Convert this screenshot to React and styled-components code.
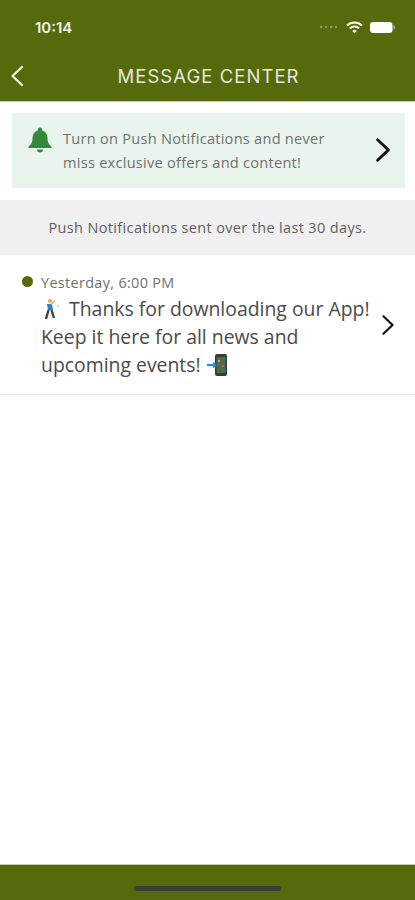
import styled, { createGlobalStyle } from "styled-components";

const GlobalStyle = createGlobalStyle`
    html, body {
        margin: 0;
        padding: 0;
        background: #fff;
    }
`

const Page = styled.div`
    width: 415px;
    height: 900px;
    display: flex;
    flex-direction: column;
    overflow: hidden;
    background: #fff;
    font-family: "Open Sans", "Liberation Sans", sans-serif;
`

const Header = styled.header`
    height: 101px;
    flex-shrink: 0;
    background: #556b0b;
    border-bottom: 1px solid #c4cdb0;
    color: #fff;
`

const StatusBar = styled.div`
    height: 54px;
    display: flex;
    align-items: center;
    justify-content: space-between;
    padding: 0 20px 0 35px;
`

const Time = styled.span`
    font-family: Inter, "Liberation Sans", sans-serif;
    font-size: 15px;
    font-weight: 600;
    color: #f1f3e6;
`

const StatusIcons = styled.div`
    display: flex;
    align-items: center;
    gap: 7px;
`

const NavBar = styled.div`
    height: 44px;
    display: flex;
    align-items: center;
    justify-content: center;
    position: relative;
`

const BackButton = styled.span`
    position: absolute;
    left: 9px;
    top: 10px;
    display: flex;
`

const Title = styled.h1`
    margin: 0 0 0 2px;
    font-family: Inter, "Open Sans", sans-serif;
    font-size: 18.5px;
    font-weight: 400;
    letter-spacing: 1.05px;
    color: #e6e9dc;
`

const Banner = styled.div`
    margin: 11px 10px 0 12px;
    height: 75px;
    display: flex;
    align-items: center;
    background: #e9f5ec;
    padding: 0 9px 0 16px;
`

const BellIcon = styled.svg`
    align-self: flex-start;
    margin-top: 14px;
`

const BannerText = styled.p`
    flex: 1;
    margin: 0 0 0 11px;
    font-size: 14.6px;
    letter-spacing: 0.25px;
    line-height: 23.5px;
    color: #707070;
`

const BannerArrow = styled.span`
    display: flex;
    margin-top: -2px;
`

const Notice = styled.div`
    margin-top: 12px;
    height: 55px;
    display: flex;
    align-items: center;
    justify-content: center;
    background: #f0f0f0;
    font-size: 14.5px;
    letter-spacing: 0.35px;
    color: #606060;
`

const MessageRow = styled.div`
    height: 139px;
    display: flex;
    align-items: center;
    padding: 0 16px 0 22px;
    border-bottom: 1px solid #ececec;
`

const MessageBody = styled.div`
    flex: 1;
    padding-top: 3px;
`

const DateLine = styled.div`
    display: flex;
    align-items: center;
    gap: 8px;
    font-size: 14.4px;
    letter-spacing: 0.35px;
    line-height: 20px;
    color: #707070;
`

const Dot = styled.span`
    width: 11px;
    height: 11px;
    border-radius: 50%;
    background: #556b0b;
    margin-top: -3px;
`

const MessageText = styled.p`
    margin: 2px 0 0 19px;
    font-size: 19.4px;
    line-height: 28px;
    color: #4a4a4a;
    white-space: nowrap;
`

const Emoji = styled.svg`
    vertical-align: ${(props) => props.$align};
    margin-right: ${(props) => props.$gap || 0}px;
`

const Spacer = styled.div`
    flex: 1;
`

const BottomBar = styled.footer`
    height: 35px;
    flex-shrink: 0;
    display: flex;
    justify-content: center;
    background: #556b0b;
    border-top: 1px solid #c4cdb0;
`

const HomeIndicator = styled.span`
    width: 147px;
    height: 5px;
    margin-top: 21px;
    border-radius: 3px;
    background: #3a4038;
`

const Chevron = ({ size = 24, color = "#111", width = 2.4 }) => (
    <svg width={size} height={size} viewBox="0 0 24 24" fill="none" stroke={color} strokeWidth={width} strokeLinecap="round" strokeLinejoin="round">
        <path d="M7 2.5 17 12 7 21.5" />
    </svg>
)

const App = () => {
    return (
        <Page>
            <GlobalStyle />
            <Header>
                <StatusBar>
                    <Time>10:14</Time>
                    <StatusIcons>
                        <svg width="20" height="4" viewBox="0 0 20 4" fill="#8f9e62">
                            <circle cx="2" cy="2" r="1.2" />
                            <circle cx="7" cy="2" r="1.2" />
                            <circle cx="12" cy="2" r="1.2" />
                            <circle cx="17" cy="2" r="1.2" />
                        </svg>
                        <svg width="17" height="13" viewBox="0 0 17 13" fill="none" stroke="#fff" strokeWidth="2">
                            <path d="M1 4.6a10.6 10.6 0 0 1 15 0" />
                            <path d="M3.9 7.4a6.5 6.5 0 0 1 9.2 0" />
                            <path d="M8.5 12.5 6.3 10a3 3 0 0 1 4.4 0Z" fill="#fff" stroke="none" />
                        </svg>
                        <svg width="25" height="11" viewBox="0 0 25 11" fill="#fff">
                            <rect x="0" y="0" width="22.5" height="11" rx="3" />
                            <rect x="23.5" y="3.5" width="1.5" height="4" rx="0.7" opacity="0.5" />
                        </svg>
                    </StatusIcons>
                </StatusBar>
                <NavBar>
                    <BackButton>
                        <svg width="16" height="24" viewBox="0 0 16 24" fill="none" stroke="#f1f3e6" strokeWidth="2.2" strokeLinecap="round" strokeLinejoin="round">
                            <path d="M13 3 3.500 12 13 21" />
                        </svg>
                    </BackButton>
                    <Title>MESSAGE CENTER</Title>
                </NavBar>
            </Header>
            <Banner>
                <BellIcon width="24" height="26" viewBox="0 0 24 26" fill="#338a3c">
                    <path d="M12 0.5c1.3 0 2.2 1 2.2 2.3v.8c3.4 1 5.3 3.9 5.3 7.4 0 4.4 1.3 6.300 4 8.500v1.500H.5V19.500c2.700-2.200 4-4.100 4-8.500 0-3.500 1.900-6.400 5.300-7.400v-.8C9.800 1.500 10.700.5 12 .5Z" />
                    <path d="M9 22.500h6a3 3 0 0 1-6 0Z" />
                </BellIcon>
                <BannerText>
                    Turn on Push Notifications and never
                    <br />
                    miss exclusive offers and content!
                </BannerText>
                <BannerArrow>
                    <Chevron size={26} width={2.7} />
                </BannerArrow>
            </Banner>
            <Notice>Push Notifications sent over the last 30 days.</Notice>
            <MessageRow>
                <MessageBody>
                    <DateLine>
                        <Dot />
                        Yesterday, 6:00 PM
                    </DateLine>
                    <MessageText>
                        <Emoji $align="-4px" $gap={3} width="20" height="22" viewBox="0 0 20 22" fill="none">
                            <circle cx="9" cy="3" r="2" fill="#e8a84c" />
                            <path d="M6 6h5l1 6H7Z" fill="#2f7fc4" />
                            <path d="M10 6.500 14 3" stroke="#e8a84c" strokeWidth="1.500" />
                            <path d="M7.500 12 5 21M10.500 12l2.500 8" stroke="#3d4a3a" strokeWidth="2.400" />
                            <circle cx="17" cy="8" r="1" fill="#b9c6cc" />
                        </Emoji>{" "}
                        Thanks for downloading our App!
                        <br />
                        Keep it here for all news and
                        <br />
                        upcoming events!{" "}
                        <Emoji $align="-5px" width="22" height="24" viewBox="0 0 22 24" fill="none">
                            <rect x="9" y="1" width="12" height="22" rx="2" fill="#2e3f36" />
                            <rect x="10.500" y="4" width="9" height="16" fill="#4d6a4c" />
                            <circle cx="13" cy="8" r="1.300" fill="#d9a441" />
                            <circle cx="17" cy="13" r="1.300" fill="#c45a4a" />
                            <path d="M1 12h9" stroke="#2f86e0" strokeWidth="2.200" />
                            <path d="M7 8.500 11 12l-4 3.500Z" fill="#2f86e0" />
                        </Emoji>
                    </MessageText>
                </MessageBody>
                <Chevron size={22} />
            </MessageRow>
            <Spacer />
            <BottomBar>
                <HomeIndicator />
            </BottomBar>
        </Page>
    )
}

export default App;
